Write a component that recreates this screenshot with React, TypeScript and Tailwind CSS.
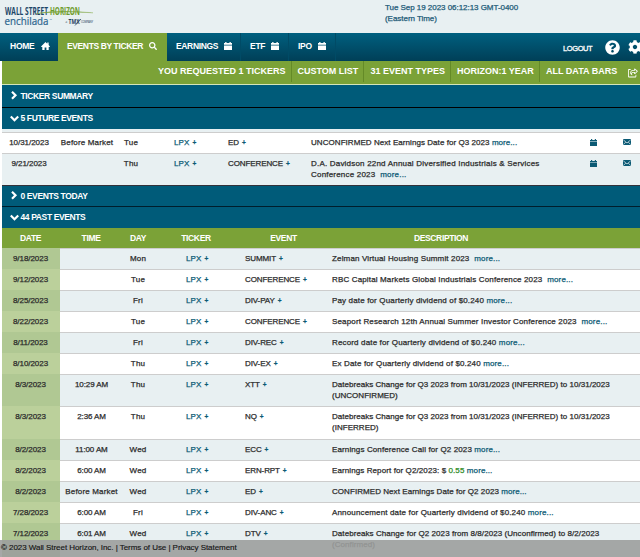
import type { ReactNode } from 'react';
import { FaCog, FaQuestionCircle, FaSearch } from 'react-icons/fa';
import { FaRegShareFromSquare } from 'react-icons/fa6';

interface EventRow {
  date: string;
  time?: string;
  day: string;
  event: string;
  description: ReactNode;
  className: string;
}

const More = () => <span className="text-[#0b5a74]">more...</span>;

const Plus = () => <span className="ml-[3px] inline-block text-[6.5px] font-bold leading-none tracking-normal text-[#0b5a74]">+</span>;

const HomeIcon = () => (
  <svg viewBox="0 0 18 16" width="9" height="8" fill="currentColor">
    <path d="M9 0l3.5 3.4V1h2.8v5.2L18 9l-1 1h-1.6v6h-4.6v-5H7.2v5H2.6v-6H1L0 9z" />
  </svg>
);

const CalendarIcon = ({ className }: { className?: string }) => (
  <svg viewBox="0 0 8 8" className={className} fill="currentColor">
    <path d="M0 1h1.2V0h1.3v1h3V0h1.3v1H8v1.8H0zM0 3.5h8V8H0z" />
  </svg>
);

const EnvelopeIcon = ({ className }: { className?: string }) => (
  <svg viewBox="0 0 16 12" width="8" height="6" className={className}>
    <path d="M0 0h16v12H0z" fill="#0b5a74" />
    <path d="M.5 1.5L8 8l7.5-6.5M.5 11l5-4.5M15.5 11l-5-4.5" fill="none" stroke="#fff" strokeWidth="1.3" />
  </svg>
);

const Chevron = ({ open }: { open?: boolean }) => (
  <svg viewBox="0 0 9 9" width="9" height="9" fill="none" stroke="currentColor" strokeWidth="2.2">
    <path d={open ? 'M.8 2.5l3.7 3.7 3.7-3.7' : 'M2 .8l3.5 3.5L2 7.8'} />
  </svg>
);

const futureEvents: EventRow[] = [
  {
    date: '10/31/2023',
    time: 'Before Market',
    day: 'Tue',
    event: 'ED',
    description: <>UNCONFIRMED Next Earnings Date for Q3 2023 <More /></>,
    className: 'h-[21px] bg-white tracking-[0.06px]',
  },
  {
    date: '9/21/2023',
    day: 'Thu',
    event: 'CONFERENCE',
    description: <>D.A. Davidson 22nd Annual Diversified Industrials &amp; Services<br />Conference 2023 &nbsp;<More /></>,
    className: 'h-8 bg-[#e8f0f2] tracking-[0.2px]',
  },
];

const pastEvents: EventRow[] = [
  { date: '9/18/2023', day: 'Mon', event: 'SUMMIT', description: <>Zelman Virtual Housing Summit 2023 &nbsp;<More /></>, className: 'h-[21px] tracking-[0.15px]' },
  { date: '9/12/2023', day: 'Tue', event: 'CONFERENCE', description: <>RBC Capital Markets Global Industrials Conference 2023 &nbsp;<More /></>, className: 'h-[21px] tracking-[0.15px]' },
  { date: '8/25/2023', day: 'Fri', event: 'DIV-PAY', description: <>Pay date for Quarterly dividend of $0.240 <More /></>, className: 'h-[21px] tracking-[0.15px]' },
  { date: '8/22/2023', day: 'Tue', event: 'CONFERENCE', description: <>Seaport Research 12th Annual Summer Investor Conference 2023 &nbsp;<More /></>, className: 'h-[21px] tracking-[0.15px]' },
  { date: '8/11/2023', day: 'Fri', event: 'DIV-REC', description: <>Record date for Quarterly dividend of $0.240 <More /></>, className: 'h-[21px] tracking-[0.15px]' },
  { date: '8/10/2023', day: 'Thu', event: 'DIV-EX', description: <>Ex Date for Quarterly dividend of $0.240 <More /></>, className: 'h-[21px] tracking-[0.15px]' },
  { date: '8/3/2023', time: '10:29 AM', day: 'Thu', event: 'XTT', description: <>Datebreaks Change for Q3 2023 from 10/31/2023 (INFERRED) to 10/31/2023<br />(UNCONFIRMED)</>, className: 'h-8 tracking-[0.03px]' },
  { date: '8/3/2023', time: '2:36 AM', day: 'Thu', event: 'NQ', description: <>Datebreaks Change for Q3 2023 from 10/31/2023 (INFERRED) to 10/31/2023<br />(INFERRED)</>, className: 'h-[33px] tracking-[0.03px]' },
  { date: '8/2/2023', time: '11:00 AM', day: 'Wed', event: 'ECC', description: <>Earnings Conference Call for Q2 2023 <More /></>, className: 'h-[21px] tracking-[0.12px]' },
  { date: '8/2/2023', time: '6:00 AM', day: 'Wed', event: 'ERN-RPT', description: <>Earnings Report for Q2/2023: $ <span className="text-[#2d8a1e]">0.55</span> <More /></>, className: 'h-[21px] tracking-[0.1px]' },
  { date: '8/2/2023', time: 'Before Market', day: 'Wed', event: 'ED', description: <>CONFIRMED Next Earnings Date for Q2 2023 <More /></>, className: 'h-[21px] tracking-[0.06px]' },
  { date: '7/28/2023', time: '6:00 AM', day: 'Fri', event: 'DIV-ANC', description: <>Announcement date for Quarterly dividend of $0.240 <More /></>, className: 'h-[21px] tracking-[0.15px]' },
  { date: '7/12/2023', time: '6:01 AM', day: 'Wed', event: 'DTV', description: <>Datebreaks Change for Q2 2023 from 8/8/2023 (Unconfirmed) to 8/2/2023<br />(Confirmed)</>, className: 'h-[34px] tracking-[0.07px]' },
];

const Logo = () => (
  <svg width="100" height="33" viewBox="0 0 100 33" className="shrink-0" fontFamily="'Open Sans', 'Liberation Sans', sans-serif">
    <text x="5" y="14.6" fontSize="10.5" fontWeight="700" fill="#1c4668" textLength="43" lengthAdjust="spacingAndGlyphs">WALL STREET</text>
    <text x="50" y="14.6" fontSize="10.5" fontWeight="700" fill="#6e9c2f" textLength="30" lengthAdjust="spacingAndGlyphs">HORIZON</text>
    <path d="M36 13.6Q60 9.4 93 12.8Q61 10.8 36 13.6Z" fill="#7ba23b" stroke="#7ba23b" strokeWidth=".3" />
    <text x="4.5" y="25.2" fontSize="11" fill="#2a648d" stroke="#2a648d" strokeWidth=".2" textLength="44" lengthAdjust="spacingAndGlyphs">enchilada</text>
    <text x="49.5" y="20.5" fontSize="3" fill="#32698f">™</text>
    <text x="65.5" y="22.8" fontSize="3" fill="#26415c">a</text>
    <text x="68.5" y="24" fontSize="6.5" fontWeight="700" fill="#26415c" textLength="11" lengthAdjust="spacingAndGlyphs">TMX</text>
    <path d="M75 25.5l6-6.5" stroke="#26415c" strokeWidth=".8" />
    <text x="81" y="22.8" fontSize="2.8" fill="#26415c" textLength="12">COMPANY</text>
  </svg>
);

const SectionBar = ({ open, children, className }: { open?: boolean; children: ReactNode; className: string }) => (
  <div className={`flex items-center bg-[#005b79] pl-2 text-[8.5px] font-bold tracking-[-0.38px] text-white ${className}`}>
    <span className="mb-px flex w-[10.5px] shrink-0"><Chevron open={open} /></span>
    {children}
  </div>
);

const App = () => {
  return (
    <div className="relative h-[557px] w-[640px] overflow-hidden bg-white font-['Liberation_Sans',Arial,sans-serif] text-[8px] leading-[11px] text-[#2b2b2b]">
      <header className="flex h-[33px] bg-[#e8f0f2]">
        <Logo />
        <div className="ml-[285px] pt-[2px] tracking-[-0.04px] text-[#1d5b78] [-webkit-text-stroke:0.25px_currentColor]">
          Tue Sep 19 2023 06:12:13 GMT-0400<br />(Eastern Time)
        </div>
      </header>

      <nav className="flex h-[28px] bg-linear-to-b from-[#006080] to-[#003f57] text-[8.5px] font-bold tracking-[-0.25px] text-white">
        <div className="flex w-[58px] items-center pb-0.5 pl-[10px]"><span className="w-[30.5px]">HOME</span><HomeIcon /></div>
        <div className="flex w-[109px] items-center bg-[#7ba237] pb-0.5 pl-[9px]"><span className="w-[82px] whitespace-nowrap tracking-[-0.38px]">EVENTS BY TICKER</span><FaSearch size={8} /></div>
        <div className="flex w-[74px] items-center border-r border-[#004b66] pb-0.5 pl-[9px]"><span className="w-[48px] tracking-[-0.35px]">EARNINGS</span><CalendarIcon className="size-2" /></div>
        <div className="flex w-[48px] items-center border-r border-[#004b66] pb-0.5 pl-[9px]"><span className="w-[21px]">ETF</span><CalendarIcon className="size-2" /></div>
        <div className="flex w-[47px] items-center border-r border-[#004b66] pb-0.5 pl-[9px]"><span className="w-[20px]">IPO</span><CalendarIcon className="size-2" /></div>
        <div className="flex flex-1 items-center overflow-hidden pl-[227px]">
          <span className="w-[42px] shrink-0 pt-[3px] text-[7.5px] font-normal tracking-[-0.4px] [-webkit-text-stroke:0.3px_currentColor]">LOGOUT</span>
          <FaQuestionCircle size={15} className="shrink-0" />
          <FaCog size={14} className="ml-2 shrink-0" />
        </div>
      </nav>

      <div className="ml-[2px] flex h-[23px] justify-end whitespace-nowrap bg-[#7ba237] pb-0.5 text-[9px] font-bold text-white">
        <div className="flex w-[134px] items-center border-r border-[#648a27]">YOU REQUESTED 1 TICKERS</div>
        <div className="flex w-[72px] items-center border-r border-[#648a27] pl-[5.5px]">CUSTOM LIST</div>
        <div className="flex w-[87px] items-center border-r border-[#648a27] pl-[6.5px]">31 EVENT TYPES</div>
        <div className="flex w-[89px] items-center border-r border-[#648a27] pl-[6px]">HORIZON:1 YEAR</div>
        <div className="flex w-[100px] items-center pl-[6px]">ALL DATA BARS<FaRegShareFromSquare size={10} className="ml-auto mr-[2px] mt-0.5" /></div>
      </div>

      <main className="ml-[2px] border-t border-[#d5e5b8]">
        <SectionBar className="h-[23px] border-b border-black">TICKER SUMMARY</SectionBar>
        <SectionBar open className="h-[21px]">5 FUTURE EVENTS</SectionBar>

        <div className="h-[3px] bg-[#e8f0f2]" />
        {futureEvents.map((row) => (
          <div key={row.date} className={`flex border-t border-[#cdcdcd] pt-1 [-webkit-text-stroke:0.25px_currentColor] ${row.className}`}>
            <div className="w-[54px] text-center tracking-[-0.04px]">{row.date}</div>
            <div className="w-[62px] text-center tracking-[0.16px]">{row.time}</div>
            <div className="w-[26px] text-center tracking-[0.2px]">{row.day}</div>
            <div className="w-[82px] pl-[30px] tracking-[0.1px] text-[#0b5a74]">LPX<Plus /></div>
            <div className="w-[83px] pl-[2px] tracking-[-0.1px]">{row.event}<Plus /></div>
            <div className="w-[280px] whitespace-nowrap pl-[2px]">{row.description}</div>
            <CalendarIcon className="ml-px mt-[2px] size-[7px] text-[#0b5a74]" />
            <EnvelopeIcon className="ml-[25.5px] mt-[2px]" />
          </div>
        ))}

        <SectionBar className="h-[22px] border-b border-t border-b-[#001e2c] border-t-[#33323a]">0 EVENTS TODAY</SectionBar>
        <SectionBar open className="h-[21px]">44 PAST EVENTS</SectionBar>

        <div className="flex h-5 items-center bg-[#7ba237] text-center text-[8.5px] font-bold tracking-[-0.35px] text-white">
          <div className="w-[57px]">DATE</div>
          <div className="w-[64px]">TIME</div>
          <div className="w-[30px]">DAY</div>
          <div className="w-[86px]">TICKER</div>
          <div className="w-[89px]">EVENT</div>
          <div className="w-[226px]">DESCRIPTION</div>
        </div>

        {pastEvents.map((row, i) => (
          <div
            key={i}
            className={`flex border-t border-[#cdcdcd] [-webkit-text-stroke:0.25px_currentColor] ${i % 2 ? 'bg-white' : 'bg-[#e8f0f2]'} ${row.className}`}
          >
            <div className={`-mt-px w-[58px] pt-[5px] pr-px text-center tracking-[-0.05px] ${i % 2 ? 'bg-[#bbd09b]' : 'bg-[#b0c893]'}`}>{row.date}</div>
            <div className={`w-[63px] pt-1 text-center ${row.time === 'Before Market' ? 'tracking-[0.16px]' : 'tracking-[-0.1px]'}`}>{row.time}</div>
            <div className="w-[30px] pt-1 text-center tracking-[0.2px]">{row.day}</div>
            <div className="w-[90px] pl-[33px] pt-1 tracking-[0.1px] text-[#0b5a74]">LPX<Plus /></div>
            <div className="w-[87px] pl-[2px] pt-1 tracking-[-0.1px]">{row.event}<Plus /></div>
            <div className="whitespace-nowrap pl-[2px] pt-1">{row.description}</div>
          </div>
        ))}
      </main>

      <footer className="absolute inset-x-0 bottom-0 h-[17px] bg-[#9c9e9d]/90 pl-[1px] pt-[2px] tracking-[-0.05px] text-[#161616] [-webkit-text-stroke:0.15px_currentColor]">
        © 2023 Wall Street Horizon, Inc. | Terms of Use | Privacy Statement
      </footer>
    </div>
  );
};

export default App;
